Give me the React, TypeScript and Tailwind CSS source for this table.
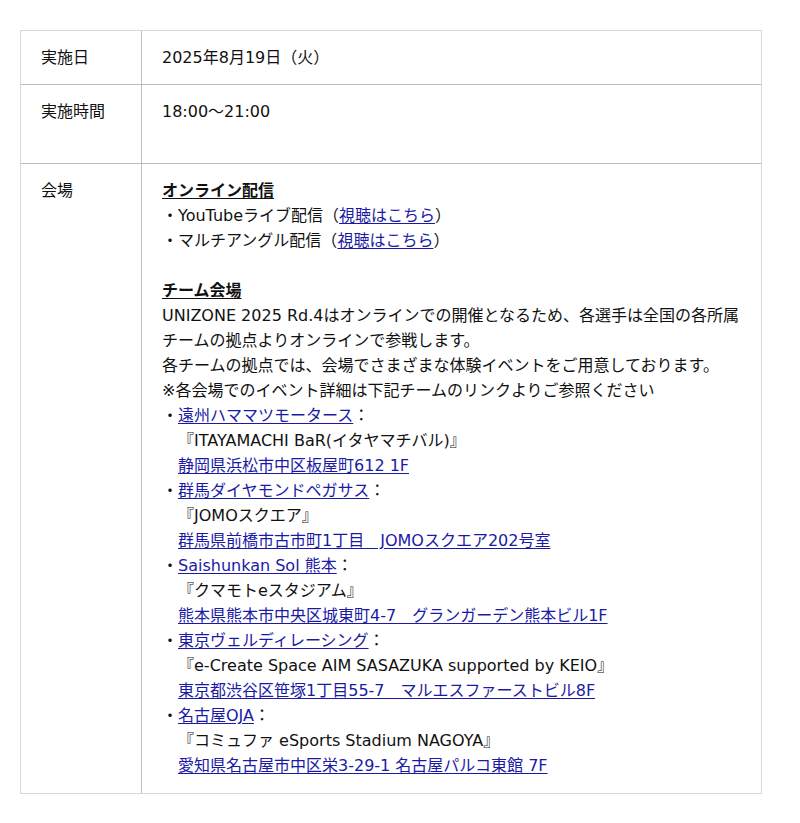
const link = "text-[#1a1aa6] underline underline-offset-2";
const sp = "\u3000";

function Item({
  team,
  venue,
  address,
}: {
  team: string;
  venue: string;
  address: string;
}) {
  return (
    <>
      <p>
        ・<a className={link}>{team}</a>：
      </p>
      <p>
        {sp}
        {venue}
      </p>
      <p>
        {sp}
        <a className={link}>{address}</a>
      </p>
    </>
  );
}

export default function App() {
  return (
    <div className="min-h-[823px] bg-white pt-[30px] pl-5 font-['DejaVu_Sans','Noto_Sans_CJK_JP',sans-serif] text-[16px] leading-[25px] text-[#111] [text-spacing-trim:space-all]">
      <div className="grid w-[742px] grid-cols-[121px_1fr] border border-[#d8d8d8]">
        <div className="border-r border-[#bdbdbd] px-5 pt-[14px] pb-[14px]">実施日</div>
        <div className="px-5 pt-[14px] pb-[14px]">2025年8月19日（火）</div>

        <div className="border-t border-r border-[#bdbdbd] px-5 pt-[14px] pb-[14px]">実施時間</div>
        <div className="border-t border-[#bdbdbd] px-5 pt-[14px] pb-[14px]">
          18:00〜21:00
          <br />
          <br />
        </div>

        <div className="border-t border-r border-[#bdbdbd] px-5 pt-[14px] pb-[15px]">会場</div>
        <div className="border-t border-[#bdbdbd] px-5 pt-[14px] pb-[15px]">
          <p className="font-bold underline underline-offset-2">オンライン配信</p>
          <p>
            ・YouTubeライブ配信（<a className={link}>視聴はこちら</a>）
          </p>
          <p>
            ・マルチアングル配信（<a className={link}>視聴はこちら</a>）
          </p>
          <p>&nbsp;</p>
          <p className="font-bold underline underline-offset-2">チーム会場</p>
          <p>
            UNIZONE 2025 Rd.4はオンラインでの開催となるため、各選手は全国の各所属チームの拠点よりオンラインで参戦します。
          </p>
          <p>各チームの拠点では、会場でさまざまな体験イベントをご用意しております。</p>
          <p>※各会場でのイベント詳細は下記チームのリンクよりご参照ください</p>
          <Item
            team="遠州ハママツモータース"
            venue="『ITAYAMACHI BaR(イタヤマチバル)』"
            address="静岡県浜松市中区板屋町612 1F"
          />
          <Item
            team="群馬ダイヤモンドペガサス"
            venue="『JOMOスクエア』"
            address="群馬県前橋市古市町1丁目　JOMOスクエア202号室"
          />
          <Item
            team="Saishunkan Sol 熊本"
            venue="『クマモトeスタジアム』"
            address="熊本県熊本市中央区城東町4-7　グランガーデン熊本ビル1F"
          />
          <Item
            team="東京ヴェルディレーシング"
            venue="『e-Create Space AIM SASAZUKA supported by KEIO』"
            address="東京都渋谷区笹塚1丁目55-7　マルエスファーストビル8F"
          />
          <Item
            team="名古屋OJA"
            venue="『コミュファ eSports Stadium NAGOYA』"
            address="愛知県名古屋市中区栄3-29-1 名古屋パルコ東館 7F"
          />
        </div>
      </div>
    </div>
  );
}
